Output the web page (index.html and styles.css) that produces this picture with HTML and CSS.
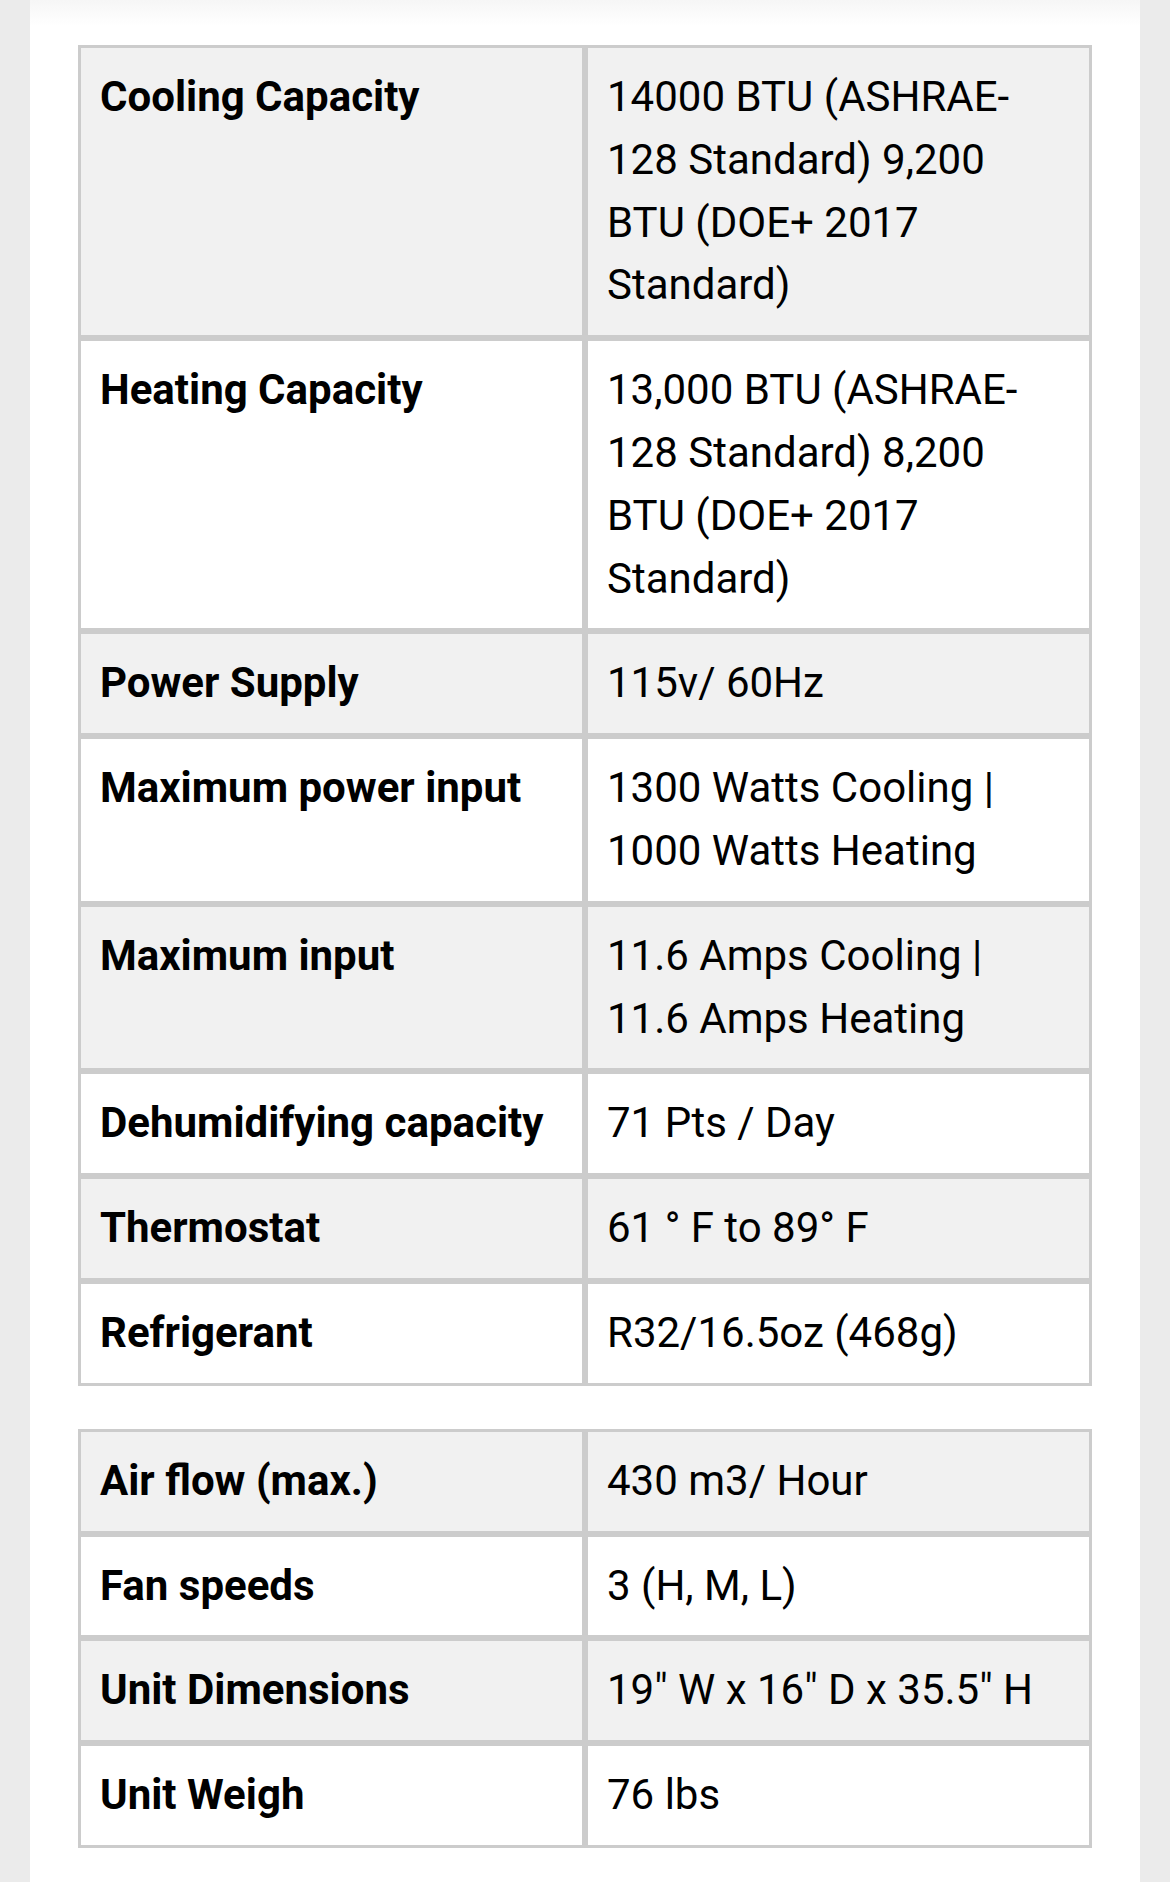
FILE: index.html
```html
<!DOCTYPE html>
<html lang="en">
<head>
<meta charset="utf-8">
<title>Specifications</title>
<link rel="stylesheet" href="styles.css">
</head>
<body>
<div class="page">
  <table class="spec">
    <tbody>
      <tr class="shade"><td class="key">Cooling Capacity</td><td class="val">14000 BTU (ASHRAE-128 Standard) 9,200 BTU (DOE+ 2017 Standard)</td></tr>
      <tr><td class="key">Heating Capacity</td><td class="val">13,000 BTU (ASHRAE-128 Standard) 8,200 BTU (DOE+ 2017 Standard)</td></tr>
      <tr class="shade"><td class="key">Power Supply</td><td class="val">115v/ 60Hz</td></tr>
      <tr><td class="key">Maximum power input</td><td class="val">1300 Watts Cooling | 1000 Watts Heating</td></tr>
      <tr class="shade"><td class="key">Maximum input</td><td class="val">11.6 Amps Cooling | 11.6 Amps Heating</td></tr>
      <tr><td class="key">Dehumidifying capacity</td><td class="val">71 Pts / Day</td></tr>
      <tr class="shade"><td class="key">Thermostat</td><td class="val">61 ° F to 89° F</td></tr>
      <tr><td class="key">Refrigerant</td><td class="val">R32/16.5oz (468g)</td></tr>
    </tbody>
  </table>
  <table class="spec">
    <tbody>
      <tr class="shade"><td class="key">Air flow (max.)</td><td class="val">430 m3/ Hour</td></tr>
      <tr><td class="key">Fan speeds</td><td class="val">3 (H, M, L)</td></tr>
      <tr class="shade"><td class="key">Unit Dimensions</td><td class="val">19" W x 16" D x 35.5" H</td></tr>
      <tr><td class="key">Unit Weigh</td><td class="val">76 lbs</td></tr>
    </tbody>
  </table>
</div>
</body>
</html>
```

FILE: styles.css
```css
html, body {
  margin: 0;
  padding: 0;
}

body {
  background: #ebebeb;
  font-family: Roboto, "Liberation Sans", Arial, sans-serif;
  color: #000;
}

.page {
  margin: 0 30px;
  min-height: 1882px;
  box-sizing: border-box;
  background: linear-gradient(to bottom, #f6f6f6 0px, #ffffff 26px);
  padding: 45px 48px 35px;
  display: flex;
  flex-direction: column;
  gap: 43px;
}

.spec {
  width: 100%;
  border-collapse: separate;
  border-spacing: 0;
  table-layout: fixed;
}

.spec td {
  width: 50%;
  border: 3px solid #cccccc;
  padding: 18px 19px;
  font-size: 42px;
  line-height: 62.8px;
  vertical-align: top;
  text-align: left;
}

.spec tr.shade td {
  background: #f1f1f1;
}

.spec .key {
  font-weight: 700;
}

.spec .val {
  font-weight: 400;
}
```
